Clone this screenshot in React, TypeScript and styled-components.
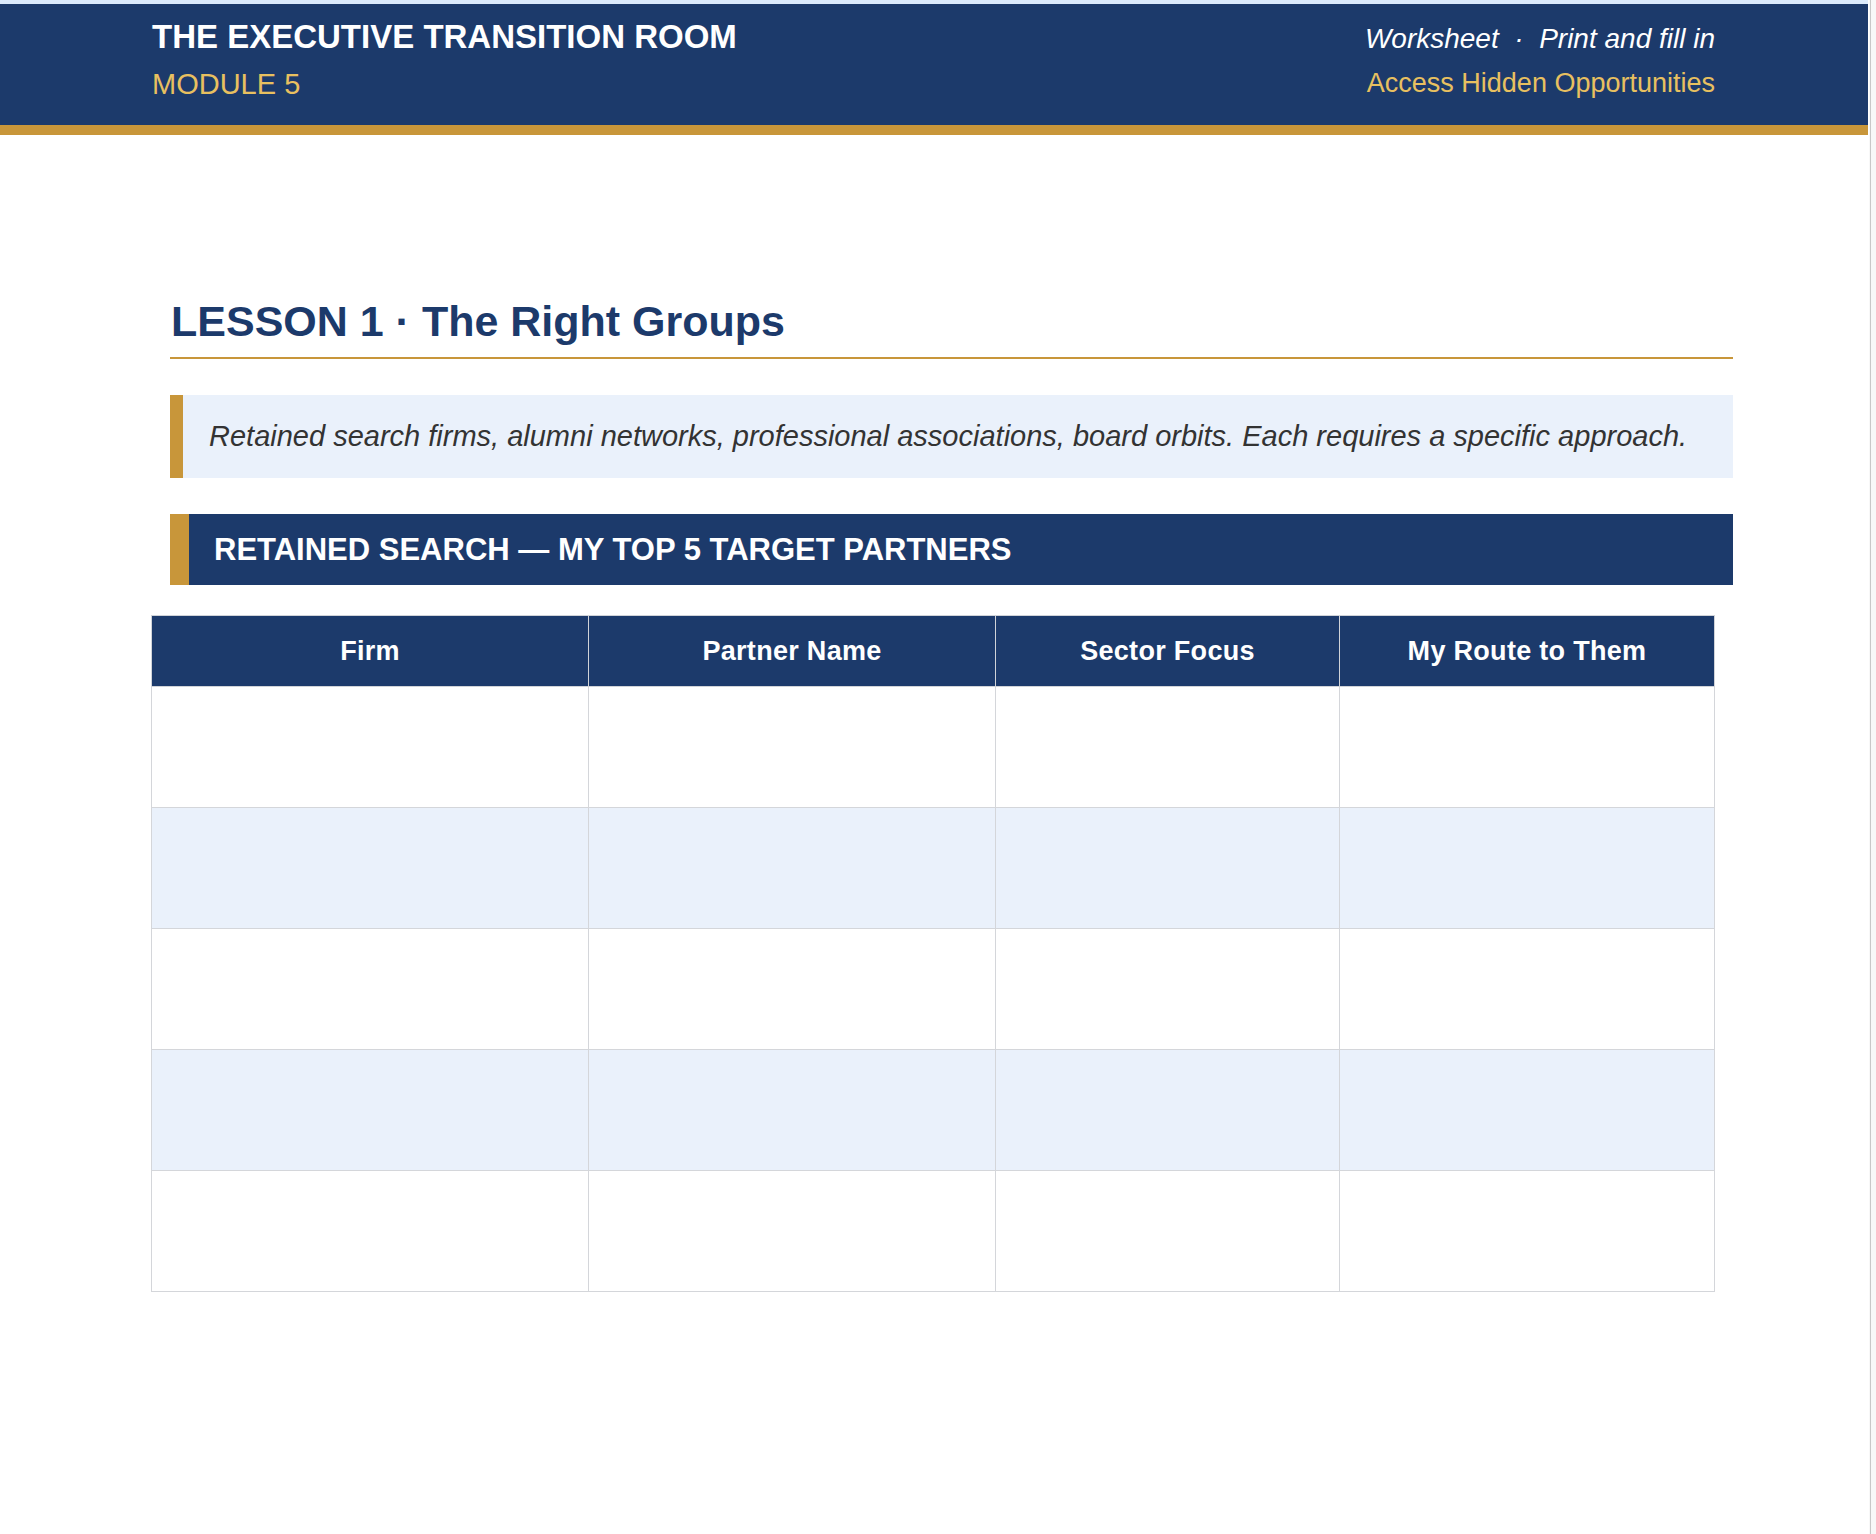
import React from "react";
import styled, { createGlobalStyle } from "styled-components";

const Global = createGlobalStyle`
  html, body { margin: 0; padding: 0; background: #fff; }
  body { font-family: "Liberation Sans", Arial, sans-serif; overflow: hidden; }
`;

const Shell = styled.div`
  display: flex;
  width: 1876px;
  height: 1534px;
  overflow: hidden;
`;
const Page = styled.div`
  width: 1868px;
  background: #fff;
  padding-top: 4px;
  box-shadow: inset 0 4px 0 #dcebfd;
`;
const Gutter = styled.div`
  width: 8px;
  padding-left: 1px;
  background: #f8f8f8;
  box-sizing: border-box;
  border-left: 1px solid #fff;
  position: relative;
  &::before {
    content: "";
    display: block;
    width: 1px;
    height: 100%;
    background: #c8c8c8;
  }
`;
const Header = styled.header`
  height: 121px;
  background: #1c3a6b;
  border-bottom: 10px solid #c8963a;
  padding: 0 153px 0 152px;
  display: flex;
  justify-content: space-between;
`;
const HeaderCol = styled.div<{ $right?: boolean }>`
  display: flex;
  flex-direction: column;
  align-items: ${(p) => (p.$right ? "flex-end" : "flex-start")};
  padding-top: ${(p) => (p.$right ? "18px" : "14px")};
`;
const BrandTitle = styled.div`
  font-size: 33px;
  line-height: 38px;
  font-weight: 700;
  color: #fff;
  white-space: nowrap;
`;
const Module = styled.div`
  font-size: 29px;
  line-height: 34px;
  margin-top: 11px;
  color: #e8c060;
  white-space: nowrap;
`;
const HeaderNote = styled.div`
  font-size: 28px;
  line-height: 34px;
  font-style: italic;
  color: #fff;
  white-space: pre;
`;
const HeaderSub = styled.div`
  font-size: 27px;
  line-height: 32px;
  margin-top: 11px;
  color: #e8c060;
  white-space: nowrap;
`;
const Content = styled.main`
  padding: 158px 135px 0 170px;
`;
const LessonTitle = styled.h1`
  margin: 0;
  padding: 0 0 8px 1px;
  font-size: 43px;
  line-height: 56px;
  font-weight: 700;
  color: #1c3a6b;
  border-bottom: 2px solid #c8963a;
  white-space: nowrap;
`;
const Callout = styled.p`
  margin: 36px 0 0;
  height: 83px;
  display: flex;
  align-items: center;
  box-sizing: border-box;
  background: #eaf1fb;
  border-left: 13px solid #c8963a;
  padding: 0 0 0 26px;
  font-size: 29px;
  font-style: italic;
  color: #333;
  white-space: nowrap;
`;
const SectionBar = styled.h2`
  margin: 36px 0 0;
  height: 71px;
  display: flex;
  align-items: center;
  box-sizing: border-box;
  background: #1c3a6b;
  border-left: 19px solid #c8963a;
  padding: 0 0 0 25px;
  font-size: 31px;
  font-weight: 700;
  color: #fff;
  white-space: pre;
`;
const Table = styled.table`
  margin: 30px 0 0 -19px;
  width: 1563px;
  table-layout: fixed;
  border-collapse: collapse;
`;
const Th = styled.th`
  height: 70px;
  padding: 0;
  background: #1c3a6b;
  color: #fff;
  font-size: 27px;
  font-weight: 700;
  text-align: center;
  border: 1px solid #d0d3d8;
  letter-spacing: 0.3px;
`;
const Row = styled.tr<{ $alt: boolean }>`
  background: ${(p) => (p.$alt ? "#eaf1fb" : "#fff")};
`;
const Td = styled.td`
  height: 120px;
  padding: 0;
  border: 1px solid #d4d6da;
`;

const columns = [
  { label: "Firm", width: 437 },
  { label: "Partner Name", width: 407 },
  { label: "Sector Focus", width: 344 },
  { label: "My Route to Them", width: 375 },
];

export default function App() {
  return (
    <Shell>
      <Global />
      <Page>
        <Header>
          <HeaderCol>
            <BrandTitle>THE EXECUTIVE TRANSITION ROOM</BrandTitle>
            <Module>MODULE 5</Module>
          </HeaderCol>
          <HeaderCol $right>
            <HeaderNote>{"Worksheet  ·  Print and fill in"}</HeaderNote>
            <HeaderSub>Access Hidden Opportunities</HeaderSub>
          </HeaderCol>
        </Header>
        <Content>
          <LessonTitle>LESSON 1 · The Right Groups</LessonTitle>
          <Callout>
            Retained search firms, alumni networks, professional associations, board orbits. Each requires a specific approach.
          </Callout>
          <SectionBar>{"RETAINED SEARCH — MY TOP 5 TARGET PARTNERS"}</SectionBar>
          <Table>
            <colgroup>
              {columns.map((c) => (
                <col key={c.label} width={c.width} />
              ))}
            </colgroup>
            <thead>
              <tr>
                {columns.map((c) => (
                  <Th key={c.label}>{c.label}</Th>
                ))}
              </tr>
            </thead>
            <tbody>
              {[0, 1, 2, 3, 4].map((r) => (
                <Row key={r} $alt={r % 2 === 1}>
                  {columns.map((c) => (
                    <Td key={c.label} />
                  ))}
                </Row>
              ))}
            </tbody>
          </Table>
        </Content>
      </Page>
      <Gutter />
    </Shell>
  );
}
